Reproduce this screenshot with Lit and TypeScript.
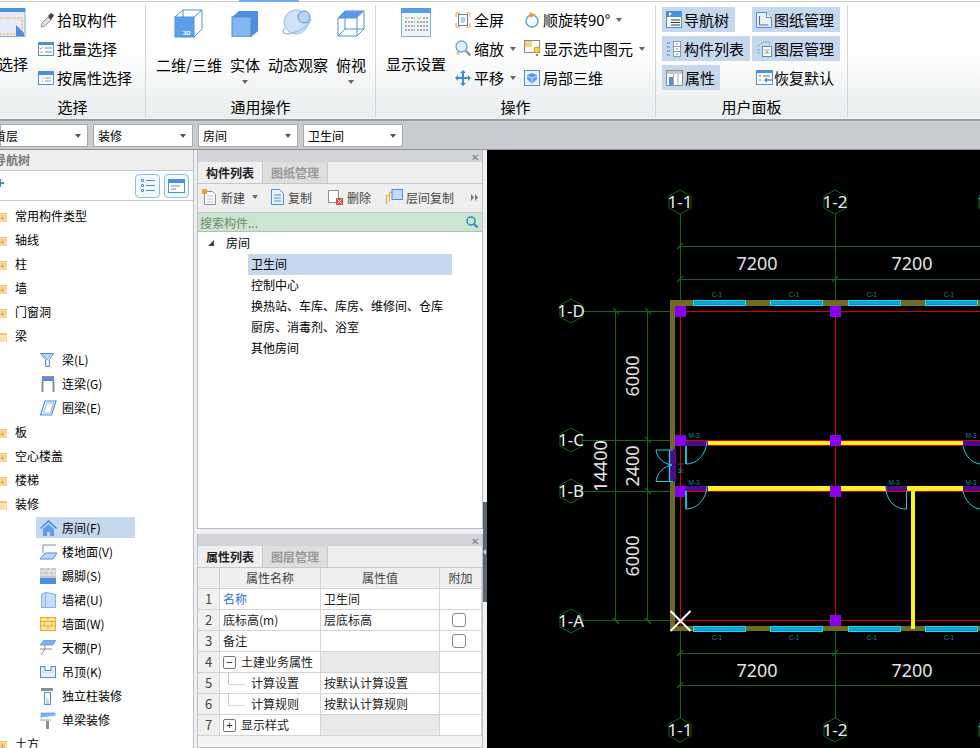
import { LitElement, html, css, svg, nothing } from "lit";
import { customElement } from "lit/decorators.js";

const B = "#4a8fe0", L = "#7fb2ee", O = "#f0a030", G = "#8d9aa8";
const ic = (w: number, h: number, body: unknown, cls = "") =>
  html`<svg class="ic ${cls}" width=${w} height=${h} viewBox="0 0 ${w} ${h}">${body}</svg>`;

const I = {
  bigSelect: ic(28, 30, svg`<rect x="-10" y=".5" width="37" height="28" fill="#e6ecf7" stroke="#7eaee6"/><rect x="-10" y="0" width="37" height="4" fill="${B}"/><rect x="-8" y="10" width="32" height="16" fill="none" stroke="${O}" stroke-dasharray="2 1.4"/><path d="M18 17v11h8v-3z" fill="${B}"/>`),
  pipette: ic(16, 16, svg`<path d="M3 15l1-4 6-6 3 3-6 6z" fill="#ddd" stroke="#999"/><path d="M10 4l3-3 3 2-1 2-2 3z" fill="#444"/>`),
  batch: ic(16, 14, svg`<rect x=".5" y=".5" width="15" height="13" fill="#fff" stroke="${B}"/><rect width="16" height="3" fill="${B}"/><path d="M2 6l1 1 2-2M2 10l1 1 2-2" stroke="${O}" fill="none"/><path d="M7 6h7M7 10h7" stroke="${B}"/>`),
  attrs: ic(16, 14, svg`<rect x=".5" y=".5" width="15" height="13" fill="#fff" stroke="${B}"/><rect width="16" height="4" fill="${B}"/><path d="M4 7h1M4 10h1M7 7h6M7 10h6" stroke="${G}"/>`),
  cube3d: ic(30, 30, svg`<path d="M1 8l8-7h19v19l-8 8" fill="none" stroke="${B}"/><path d="M9 1v7M20 8l8-7" stroke="${B}" fill="none"/><rect x="1" y="8" width="19" height="20" fill="#5c9eea" stroke="${B}"/><text x="9" y="26" class="t3d">3D</text>`),
  solid: ic(28, 28, svg`<path d="M1 8l7-6h19v20l-7 6z" fill="#4f8edc"/><rect x="1" y="8" width="19" height="20" fill="#83b5ee" stroke="${B}"/>`),
  orbit: ic(32, 28, svg`<circle cx="14" cy="13" r="12" fill="#cfe2f8" stroke="#9cc0ea"/><circle cx="22" cy="8" r="6" fill="#b9d5f5" stroke="${B}"/><path d="M3 19c-5 5 0 7 8 5 8-2 16-8 18-14" fill="none" stroke="#9cc0ea" stroke-width="1.5"/>`),
  wire: ic(28, 28, svg`<path d="M1 9l7-7h19v18l-7 7H1z" fill="#fff" stroke="${B}"/><path d="M8 2l19 0-7 7H1z" fill="#5a9ae6"/><path d="M20 9v18M1 9h19M8 2v18h19M1 27l7-7" fill="none" stroke="${B}"/>`),
  display: ic(30, 30, svg`<rect x=".5" y=".5" width="29" height="28" fill="#f0f4fb" stroke="#7eaee6"/><rect width="30" height="5" fill="#5b9be6"/><path d="M4 9l2 2 2-2M16 9l2 2 2-2" stroke="${O}" fill="none"/><path d="M10 10h4M22 10h5M4 14h10M16 14h11M4 18h10M16 18h11M4 22h10M16 22h11" stroke="#667" stroke-dasharray="2 1"/>`),
  full: ic(16, 16, svg`<path d="M1 5V1h4M11 1h4v4M15 11v4h-4M5 15H1v-4" fill="none" stroke="${O}"/><rect x="3.5" y="2.5" width="9" height="11" fill="#fff" stroke="#5b7fa8"/><path d="M5.500 6h5M5.500 8h5M5.500 10h4" stroke="#7f9bc0"/>`),
  rotate: ic(16, 16, svg`<circle cx="8" cy="9" r="6" fill="none" stroke="#5ba0e6" stroke-width="1.500"/><path d="M6 0v6l6-3z" fill="${O}"/>`),
  zoom: ic(16, 17, svg`<circle cx="6.500" cy="6.500" r="5.500" fill="#e6f0fb" stroke="#5ba0e6" stroke-width="1.300"/><path d="M10.500 10.500l5 5" stroke="#999" stroke-width="2.500"/><path d="M1 13h4M3 11v4" stroke="${O}"/>`),
  sel: ic(18, 17, svg`<rect x=".5" y=".5" width="15" height="12" fill="#fff" stroke="#888"/><rect x="1" y="1" width="7" height="6" fill="#f7d484"/><circle cx="13" cy="10" r="3" fill="#f8d44c" stroke="#c9a020"/><path d="M12 14h2v2h-2z" fill="#888"/>`, "tight"),
  pan: ic(16, 16, svg`<path d="M8 0l3 3H9v4h4V5l3 3-3 3V9H9v4h2l-3 3-3-3h2V9H3v2L0 8l3-3v2h4V3H5z" fill="#3f8ae0"/>`),
  part: ic(16, 16, svg`<rect x=".5" y=".5" width="15" height="15" fill="#eef4fc" stroke="${B}"/><path d="M8 3l5 2v4l-5 5-5-5V5z" fill="#5b9be6"/><path d="M3 6l5 2 5-2M8 8v6" stroke="#cfe0f5" fill="none"/>`),
  nav: ic(16, 17, svg`<rect x=".5" y=".5" width="15" height="16" fill="#fff" stroke="${B}"/><rect width="16" height="6" fill="${B}"/><path d="M3 1v4l3-2z" fill="#fff"/><path d="M5 9h9M5 11.500h9M5 14h9" stroke="#333"/>`),
  list: ic(16, 16, svg`<path d="M1 2h3M1 6h3M1 10h3M1 14h3" stroke="${B}" stroke-width="1.500" stroke-dasharray="1.500 .7"/><rect x="7.500" y=".5" width="7" height="15" fill="#fff" stroke="${G}"/><path d="M7 5.500h8M7 10.500h8" stroke="${G}"/><path d="M10 3h2M10 8h2M10 13h2" stroke="${B}"/>`),
  attr: ic(17, 16, svg`<rect x=".5" y=".5" width="16" height="15" fill="#fff" stroke="#8a8f96"/><rect x="1" y="1" width="15" height="3" fill="#c5c8cc"/><rect x="3" y="7" width="4" height="8" fill="${B}"/><path d="M7.500 4v11M12 4v11" stroke="#aaa"/>`),
  sheet: ic(16, 17, svg`<path d="M.5 1.500h10l5 5v10H.5z" fill="#eaf2fc" stroke="${B}"/><path d="M10.500 1.500v5h5" fill="#fff" stroke="${B}"/><path d="M3.500 5v9h9" fill="none" stroke="#667"/>`),
  layer: ic(16, 17, svg`<path d="M1 7l6-5h7l-1 3M1 10h3M1 13h3" fill="none" stroke="#9aa"/><rect x="6.500" y="6.500" width="9" height="10" fill="#fff" stroke="${B}"/><path d="M8 10h6M8 13h6" stroke="#8ab"/><rect x="10" y="11" width="2" height="2" fill="${O}"/>`),
  restore: ic(18, 15, svg`<rect x=".5" y=".5" width="16" height="14" fill="#fff" stroke="${B}"/><rect width="17" height="3" fill="${B}"/><path d="M3 6h2M3 10h2M7 6h7" stroke="#667"/><path d="M17 10H9l2-2M9 10l2 2" fill="none" stroke="${B}" stroke-width="1.300"/>`, "tight"),
  folder: ic(16, 14, svg`<path d="M0 2h6l2 2h8v9H0z" fill="#f2c679"/><path d="M0 5h16v8H0z" fill="#f7d695"/><path d="M10 9h3M11.500 7.500v3" stroke="#d89a3c"/>`),
  folderOpen: ic(16, 14, svg`<path d="M0 2h6l2 2h8v9H0z" fill="#f2c679"/><path d="M2 6h14l-1 7H0z" fill="#fbe2ad"/>`),
  beam: ic(16, 16, svg`<path d="M.5 1.500h13l-4 6v7h-4v-7z" fill="#eaf2fc" stroke="${B}"/><path d="M3 2l4 6 4-6" fill="#c4d8f2" stroke="#8fb4e6"/>`),
  lian: ic(14, 18, svg`<rect x="1" y="1" width="12" height="2" fill="#8a9096"/><rect x="1" y="3" width="12" height="3" fill="${B}"/><path d="M1.500 6v11M12.500 6v11" stroke="#8a9096" stroke-width="2"/>`),
  ring: ic(17, 16, svg`<path d="M5 1h11l-4.500 14H.5z" fill="#eef4fc" stroke="${B}" stroke-width="1.200"/><path d="M7 3h6.500l-3 10H3.500z" fill="#fff" stroke="#9bbdea"/>`),
  house: ic(17, 16, svg`<path d="M8.500 0L0 8l1 1 7.500-7 7.500 7 1-1z" fill="#3f8ae0"/><path d="M3 9l5.500-5L14 9v7h-4v-4H7v4H3z" fill="#5c9eea"/>`),
  floor: ic(17, 16, svg`<path d="M3 9V1h13" fill="none" stroke="#8a9096"/><path d="M5 9h12l-4 6H0z" fill="#bcd5f3" stroke="${B}"/>`),
  skirt: ic(16, 16, svg`<rect width="16" height="10" fill="#c8c8c8"/><path d="M0 3h16M0 7h16M5 0v3M11 0v3M3 3v4M9 3v4M14 3v4" stroke="#eee"/><rect y="10" width="16" height="6" fill="${B}"/>`),
  dado: ic(15, 16, svg`<path d="M.5 2.500l4-2 10 2v13h-10l-4 0z" fill="#c9def6" stroke="${L}" stroke-width="1.200"/><path d="M4.500 .5v15" stroke="${L}"/>`),
  brick: ic(16, 14, svg`<rect x=".5" y=".5" width="15" height="13" fill="#fce4a6" stroke="#f0ad1e"/><path d="M0 4.500h16M0 9h16M8 0v4.500M4 4.500V9M12 4.500V9M8 9v5" stroke="#f0ad1e"/>`),
  ceil: ic(16, 16, svg`<path d="M4 0h12l-3 5H0z" fill="#7fb2ee" stroke="${B}" stroke-width=".6"/><path d="M0 9h12M5 5v4L1 15" fill="none" stroke="#8a9096"/>`),
  drop: ic(16, 12, svg`<path d="M.5 .5h4.500v4h6v-4h4.500v11H.5z" fill="#eaf2fc" stroke="${B}" stroke-width="1.100"/><path d="M3 .5v6h10v-6" fill="none" stroke="#cfe0f5"/>`),
  colD: ic(14, 17, svg`<rect x="0" y="0" width="12" height="3" fill="#8a9096"/><rect x="3.500" y="4.500" width="6" height="12" fill="#fff" stroke="${B}"/><path d="M5 9v7h3v-4z" fill="#bcd5f3"/>`),
  beamD: ic(16, 17, svg`<path d="M1 1h14v3L1 6z" fill="${L}" stroke="${B}" stroke-width=".6"/><path d="M1 6l14-2" stroke="#fff"/><path d="M0 8h11" stroke="${G}"/><rect x="6" y="9" width="3" height="8" fill="#8a9096"/>`),
  listBtn: ic(14, 13, svg`<path d="M.5 .5h2v2h-2zM.5 5.500h2v2h-2zM.5 10.500h2v2h-2z" fill="#fff" stroke="${B}"/><path d="M5 1.500h9M5 6.500h9M5 11.500h9" stroke="${B}"/>`),
  winBtn: ic(17, 14, svg`<rect x=".5" y=".5" width="16" height="13" fill="#fff" stroke="${B}"/><rect width="17" height="4" fill="${B}"/><path d="M3 7h9M3 10h5" stroke="${B}"/>`),
  tbNew: ic(15, 16, svg`<path d="M2.500 2.500h8l3 3v10h-11z" fill="#fff" stroke="#8a9096"/><path d="M5 7h6M5 10h6M5 13h6" stroke="#bbb"/><path d="M0 0h5v5H0z" fill="${O}"/>`),
  tbCopy: ic(13, 16, svg`<path d="M.5 .5h8l4 4v11H.5z" fill="#eaf2fc" stroke="${B}"/><path d="M3 6h7M3 9h7M3 12h7" stroke="${B}"/>`),
  tbDel: ic(15, 15, svg`<rect x=".5" y=".5" width="10" height="12" fill="#fff" stroke="#8a9096"/><rect x="8" y="8" width="7" height="7" fill="#e04848"/><path d="M9.500 9.500l4 4M13.500 9.500l-4 4" stroke="#fff"/>`),
  tbLayer: ic(17, 16, svg`<path d="M.5 15.500v-9h3M3.500 12.500v-9h3" fill="none" stroke="${O}"/><rect x="6" y=".5" width="10.500" height="10" fill="#c4dcf8" stroke="${B}"/>`),
  mag: ic(12, 12, svg`<circle cx="5" cy="5" r="4" fill="none" stroke="#2a88c8" stroke-width="1.500"/><path d="M8 8l3.500 3.500" stroke="#2a88c8" stroke-width="2"/>`),
  more: ic(7, 7, svg`<path d="M0 0l3 3.500-3 3.500zM4 0l3 3.500-3 3.500z" fill="#777"/>`),
};

const TREE: [string, "f" | "o" | "c", unknown?, boolean?][] = [
  ["常用构件类型", "f"], ["轴线", "f"], ["柱", "f"], ["墙", "f"], ["门窗洞", "f"], ["梁", "o"],
  ["梁(L)", "c", I.beam], ["连梁(G)", "c", I.lian], ["圈梁(E)", "c", I.ring],
  ["板", "f"], ["空心楼盖", "f"], ["楼梯", "f"], ["装修", "o"],
  ["房间(F)", "c", I.house, true], ["楼地面(V)", "c", I.floor], ["踢脚(S)", "c", I.skirt], ["墙裙(U)", "c", I.dado],
  ["墙面(W)", "c", I.brick], ["天棚(P)", "c", I.ceil], ["吊顶(K)", "c", I.drop], ["独立柱装修", "c", I.colD], ["单梁装修", "c", I.beamD],
  ["土方", "f"],
];

const AX = "#0a6e0a";
const hex = (x: number, y: number, t: string) => svg`
  <polygon points="${x},${y - 12} ${x + 11},${y - 6} ${x + 11},${y + 6} ${x},${y + 12} ${x - 11},${y + 6} ${x - 11},${y - 6}" fill="#000" stroke="${AX}"/>
  <text x=${x} y=${y + 6} class="axt">${t}</text>`;
const tick = (x: number, y: number) => svg`<path d="M${x - 3} ${y + 3}L${x + 3} ${y - 3}" stroke="${AX}" stroke-width="1.300"/>`;
const tick2 = (x: number, y: number) => svg`<path d="M${x - 3} ${y - 3}L${x + 3} ${y + 3}" stroke="${AX}" stroke-width="1.300"/>`;
const win = (x: number, y: number, ly: number) => svg`
  <rect x=${x + .5} y=${y + .5} width="52" height="5" fill="#0090c8" stroke="#19e0f0"/>
  <path d="M${x} ${y + 3}h52" stroke="#60e8f8" stroke-width=".5"/>
  <text x=${x + 24} y=${ly} class="lab">C-1</text>`;
const col = (x: number, y: number) => svg`<rect x=${x} y=${y} width="11" height="11" fill="#8800ee"/>`;
const dim = (t: string, x: number, y: number) => svg`<text class="dim" transform="rotate(-90 ${x} ${y})" x=${x} y=${y + 6}>${t}</text>`;
const doorR = (y: number) => svg`
  <rect x="686" y=${y} width="22" height="5" fill="#480f8c"/>
  <path d="M686 ${y + 5}v18c10 0 20-8 21-23" fill="none" stroke="#14d4e4" stroke-width="1"/>
  <path d="M686 ${y + 5}v18" stroke="#14d4e4" stroke-width="1.500"/>`;

@customElement("app-root")
export class AppRoot extends LitElement {
  static styles = css`
    :host { display: block; width: 980px; height: 748px; overflow: hidden; background: #f0f0f0; font-family: "Noto Sans CJK SC", "Noto Sans", sans-serif; color: #000; }
    * { box-sizing: border-box; }
    .ic { display: block; flex: none; }
    .ic.tight { margin-right: -2px; }
    .t3d { font: bold 6px "Liberation Sans", sans-serif; fill: #fff; }
    .top { height: 2px; background: #fff; border-bottom: 1px solid #ccc; }
    .top i { display: block; margin-left: 239px; width: 60px; height: 2px; background: #6aaef0; }
    .ribbon { display: flex; height: 119px; border-bottom: 2px solid #9a9c9e; background: linear-gradient(#fff 40%, #eceff0 90%); font-size: 15px; line-height: 20px; overflow: hidden; }
    .group { display: flex; flex-direction: column; flex: none; margin-top: 3px; margin-bottom: 2px; border-right: 1px solid #d3d6d8; }
    .g1 { width: 146px; } .g2 { width: 230px; } .g3 { width: 280px; } .g4 { width: 192px; }
    .gbody { height: 92px; display: flex; }
    .glabel { text-align: center; line-height: 20px; margin-top: 1px; }
    .big { display: flex; flex-direction: column; align-items: center; padding-top: 3px; white-space: nowrap; }
    .bigicon { height: 44px; display: flex; align-items: flex-start; }
    .biglab { margin-top: 2px; }
    .g1 .big { width: 40px; margin-left: -2px; align-items: flex-start; padding-left: 0; }
    .stack { display: flex; flex-direction: column; }
    .small { display: flex; align-items: center; height: 29px; gap: 3px; white-space: nowrap; }
    .g2 .gbody { padding-left: 10px; gap: 8px; }
    .g2 .big { padding-top: 4px; }
    .g3 .big { width: 60px; margin-left: 10px; }
    .g3 .s1 { margin-left: 9px; width: 69px; }
    .caret { width: 0; height: 0; border: 3.500px solid transparent; border-top: 4px solid #666; border-bottom: 0; margin-left: 3px; flex: none; }
    .bigcaret { margin: 5px 0 0; }
    .g4 .gbody { padding-left: 6px; gap: 2px; padding-top: 2px; }
    .pane { display: flex; align-items: center; height: 25px; padding-left: 4px; gap: 2px; margin-bottom: 4px; white-space: nowrap; }
    .pane.on { background: #c6d8ee; }
    .w73 { width: 73px; } .w88 { width: 88px; } .w58 { width: 58px; }
    .right { width: 88px; }
    .col2 { width: 88px; }
    .selbar { height: 29px; background: #c8cbd0; border-bottom: 1px solid #8f9194; display: flex; gap: 5px; padding-top: 3px; padding-bottom: 2px; font-size: 12px; line-height: 20px; }
    .sel { width: 100px; height: 23px; background: #fff; border: 1px solid #aaa; display: flex; align-items: center; justify-content: space-between; padding: 0 6px 0 4px; }
    .sel.first { width: 88px; padding-left: 0; }
    .sel.first span { margin-left: -7px; }
    .sel .caret { border-top-color: #555; }
    .main { height: 598px; display: flex; }
    .left { width: 194px; flex: none; background: #fff; border-right: 1px solid #b9bcc2; display: flex; flex-direction: column; overflow: hidden; }
    .lhead { height: 21px; background: #efefef; border-bottom: 1px solid #c5c8cd; font-size: 12px; font-weight: 700; color: #777; line-height: 20px; text-indent: -6px; flex: none; }
    .ltool { height: 30px; flex: none; background: #fff; border-bottom: 1px solid #c5c8cd; display: flex; align-items: center; }
    .lbtns { margin-left: auto; display: flex; gap: 4px; margin-right: 4px; }
    .lbtn { width: 25px; height: 24px; border: 1px solid #8abcf2; border-radius: 4px; background: #f2f8ff; display: flex; align-items: center; justify-content: center; }
    .plusi { margin-left: -4px; margin-top: -5px; flex: none; }
    .tree { padding-top: 3px; font-size: 12px; line-height: 24px; flex: none; }
    .row { height: 24px; display: flex; align-items: center; white-space: nowrap; }
    .row.f .ic { margin-left: -9px; margin-right: 8px; }
    .row.c { margin-left: 36px; width: 99px; padding-left: 4px; gap: 6px; }
    .row.c .slot { width: 16px; display: flex; justify-content: center; flex: none; }
    .row.on { background: linear-gradient(transparent 1px, #c6d8ee 1px, #c6d8ee 22px, transparent 22px); }
    .gapL { width: 3px; flex: none; background: #f0f0f0; }
    .mid { width: 286px; flex: none; display: flex; flex-direction: column; }
    .panel { border: 1px solid #b9bcc2; border-top: 0; display: flex; flex-direction: column; background: #fff; overflow: hidden; }
    .p1 { height: 379px; flex: none; }
    .p2 { height: 214px; flex: none; margin-top: 5px; background: #f4f4f4; }
    .pt { height: 12px; background: #d2d4d9; display: flex; justify-content: flex-end; align-items: center; padding-right: 3px; font-size: 10px; color: #777; line-height: 11px; flex: none; }
    .tabs { height: 22px; display: flex; background: #efefef; border-bottom: 1px solid #c5c8cd; font-size: 12px; line-height: 21px; flex: none; }
    .tab { width: 65px; text-align: center; font-weight: 700; color: #222; border-right: 1px solid #c5c8cd; }
    .tab.off { background: #dedede; color: #999; }
    .mtool { height: 29px; background: #efefef; border-bottom: 1px solid #c5c8cd; display: flex; align-items: center; padding: 0 0 2px 4px; font-size: 12px; color: #444; flex: none; }
    .mi { display: flex; align-items: center; gap: 4px; white-space: nowrap; }
    .m1 { width: 69px; } .m2 { width: 57px; } .m3 { width: 58px; } .m4 { width: 85px; gap: 3px; }
    .search { height: 19px; background: #cbe6cf; border-bottom: 1px solid #bbb; display: flex; align-items: center; justify-content: space-between; padding: 0 4px 0 2px; font-size: 12px; color: #6f8a73; flex: none; }
    .mtree { font-size: 12px; line-height: 19px; padding-top: 1px; flex: 1; }
    .mroot { display: flex; align-items: center; height: 21px; padding: 0 0 2px 10px; gap: 12px; }
    .tri { width: 0; height: 0; border-style: solid; border-width: 0 0 6px 6px; border-color: transparent transparent #444 transparent; flex: none; }
    .mrow { margin-left: 50px; padding-left: 3px; width: 204px; height: 21px; white-space: nowrap; }
    .mrow.on { background: #c6d8ee; }
    .table { display: grid; grid-template-columns: 22px 101px 119px 42px; grid-auto-rows: 21px; font-size: 12px; line-height: 20px; flex: none; color: #222; }
    .table > div { border-right: 1px solid #d4d4d4; border-bottom: 1px solid #d4d4d4; padding: 0 3px; background: #fff; white-space: nowrap; display: flex; align-items: center; position: relative; }
    .table .h { background: #efefef; justify-content: center; color: #444; }
    .table .n { background: #f0f0f0; justify-content: center; font-size: 13px; color: #444; padding: 0; }
    .table .gr { background: #e9e9e9; }
    .table .blue { color: #2a6fe8; }
    .cb { width: 14px; height: 14px; border: 1px solid #888; border-radius: 3px; background: #fff; margin-left: 9px; }
    .box { width: 13px; height: 13px; border: 1px solid #777; border-radius: 2px; margin-right: 5px; background: #fff; display: flex; align-items: center; justify-content: center; font: 11px/11px "Liberation Sans", sans-serif; flex: none; }
    .ind { padding-left: 31px !important; }
    .ind::before { content: ""; position: absolute; left: 8px; top: -1px; width: 16px; height: 12px; border-left: 1px solid #c4c4c4; border-bottom: 1px solid #d8d8d8; }
    .split { width: 4px; flex: none; background: #f0f0f0; display: flex; flex-direction: column; }
    .split i { display: flex; align-items: center; margin-top: 352px; height: 100px; background: #5a6670; }
    .split i::before { content: ""; border: 3px solid transparent; border-right-color: #cfd3d6; border-left: 0; }
    .canvas { display: block; flex: none; background: #000; }
    .axt { font: 17px "Noto Sans", sans-serif; fill: #eee; text-anchor: middle; }
    .dim { font: 18px "Noto Sans", sans-serif; fill: #e4e4e4; text-anchor: middle; }
    .lab { font: 6.500px "Liberation Sans", sans-serif; fill: #0a8f96; text-anchor: middle; }
  `;

  private big(icon: unknown, label: string, caret = false) {
    return html`<div class="big"><div class="bigicon">${icon}</div><div class="biglab">${label}</div>${caret ? html`<div class="caret bigcaret"></div>` : nothing}</div>`;
  }
  private small(icon: unknown, label: string, caret = false) {
    return html`<div class="small">${icon}<span>${label}</span>${caret ? html`<div class="caret"></div>` : nothing}</div>`;
  }
  private pane(icon: unknown, label: string, cls: string) {
    return html`<div class="pane ${cls}">${icon}<span>${label}</span></div>`;
  }

  private canvas() {
    const winX = [693, 770, 848, 925];
    return html`<svg class="canvas" width="493" height="598" viewBox="487 150 493 598">
      <g fill="none" stroke=${AX}>
        <path d="M680.500 214V718M835.500 214V718"/>
        <path d="M680 246.500H980M680 279.500H980M680 653.500H980M680 685.500H980"/>
        <path d="M582 311.500H680M582 440.500H680M582 491.500H680M582 620.500H680"/>
        <path d="M615.500 311V621M647.500 311V621"/>
      </g>
      ${[246, 279, 653].map((y) => tick(680, y))}${tick(835, 279)}${tick(835, 653)}${tick(680, 685)}
      ${[311, 621].map((y) => tick2(616, y))}${[311, 440, 491, 621].map((y) => tick2(648, y))}
      <path d="M670 300H980V306H675V626H980V631H670Z" fill="#6f6b1f"/>
      <path d="M675 311.500H980M675 620.500H980M680.500 316V626M835.500 316V626" stroke="#d80000" fill="none"/>
      <path d="M680 445.500H980M680 491.500H980M680 440.500H980" stroke="#d80000" fill="none"/>
      <rect x="707" y="441" width="256" height="4" fill="#fcf420"/>
      <rect x="707" y="486" width="179" height="5" fill="#fcf420"/>
      <rect x="906" y="486" width="57" height="5" fill="#fcf420"/>
      <rect x="911" y="491" width="4" height="138" fill="#fcf420"/>
      ${[[675, 306], [830, 306], [675, 435], [830, 435], [675, 486], [830, 486], [830, 615]].map(([x, y]) => col(x, y))}
      ${winX.map((x) => win(x, 300, 297))}
      ${winX.map((x) => win(x, 626, 640))}
      ${doorR(441)}${doorR(486)}
      <rect x="886" y="486" width="21" height="5" fill="#480f8c"/>
      <path d="M906.500 491v18c-10 0-20-6-21-23" fill="none" stroke="#14d4e4"/>
      <rect x="963" y="441" width="17" height="5" fill="#480f8c"/>
      <rect x="963" y="486" width="17" height="5" fill="#480f8c"/>
      <path d="M963 446c2 10 9 17 17 18M963 491c2 10 9 17 17 18" fill="none" stroke="#14d4e4"/>
      <rect x="670" y="449" width="6" height="33" fill="#480f8c"/>
      <path d="M656 450H673M656 481.500H673M669.500 450V481" stroke="#14d4e4" fill="none" stroke-width="1.200"/>
      <path d="M656 450C657 458 664 464 672 465M656 481C657 473 664 466 672 465" fill="none" stroke="#14d4e4"/>
      ${[[694, 438], [694, 485], [894, 485], [971, 438], [971, 485]].map(([x, y]) => svg`<text x=${x} y=${y} class="lab">M-3</text>`)}
      <text class="lab" transform="rotate(-90 683 468)" x="683" y="468">M-1</text>
      <path d="M670.500 611L690.500 631M690.500 611L670.500 631" stroke="#fff" stroke-width="2"/>
      ${[["7200", 757, 270], ["7200", 912, 270], ["7200", 757, 677], ["7200", 912, 677]].map(([t, x, y]) => svg`<text class="dim" x=${x} y=${y}>${t}</text>`)}
      ${dim("6000", 633, 376)}${dim("2400", 633, 466)}${dim("6000", 633, 556)}${dim("14400", 601, 466)}
      ${hex(680, 202, "1-1")}${hex(835, 202, "1-2")}${hex(990, 202, "1-3")}
      ${hex(680, 730, "1-1")}${hex(835, 730, "1-2")}${hex(990, 730, "1-3")}
      ${hex(571, 311, "1-D")}${hex(571, 440, "1-C")}${hex(571, 491, "1-B")}${hex(571, 621, "1-A")}
    </svg>`;
  }

  render() {
    return html`
      <div class="top"><i></i></div>
      <div class="ribbon">
        <div class="group g1">
          <div class="gbody">
            ${this.big(I.bigSelect, "选择")}
            <div class="stack">
              ${this.small(I.pipette, "拾取构件")}
              ${this.small(I.batch, "批量选择")}
              ${this.small(I.attrs, "按属性选择")}
            </div>
          </div>
          <div class="glabel">选择</div>
        </div>
        <div class="group g2">
          <div class="gbody">
            ${this.big(I.cube3d, "二维/三维")}
            ${this.big(I.solid, "实体", true)}
            ${this.big(I.orbit, "动态观察")}
            ${this.big(I.wire, "俯视", true)}
          </div>
          <div class="glabel">通用操作</div>
        </div>
        <div class="group g3">
          <div class="gbody">
            ${this.big(I.display, "显示设置")}
            <div class="stack s1">
              ${this.small(I.full, "全屏")}
              ${this.small(I.zoom, "缩放", true)}
              ${this.small(I.pan, "平移", true)}
            </div>
            <div class="stack">
              ${this.small(I.rotate, "顺旋转90°", true)}
              ${this.small(I.sel, "显示选中图元", true)}
              ${this.small(I.part, "局部三维")}
            </div>
          </div>
          <div class="glabel">操作</div>
        </div>
        <div class="group g4">
          <div class="gbody">
            <div class="stack col2">
              ${this.pane(I.nav, "导航树", "on w73")}
              ${this.pane(I.list, "构件列表", "on w88")}
              ${this.pane(I.attr, "属性", "on w58")}
            </div>
            <div class="stack right">
              ${this.pane(I.sheet, "图纸管理", "on")}
              ${this.pane(I.layer, "图层管理", "on")}
              ${this.pane(I.restore, "恢复默认", "")}
            </div>
          </div>
          <div class="glabel">用户面板</div>
        </div>
      </div>
      <div class="selbar">
        <div class="sel first"><span>首层</span><div class="caret"></div></div>
        <div class="sel"><span>装修</span><div class="caret"></div></div>
        <div class="sel"><span>房间</span><div class="caret"></div></div>
        <div class="sel"><span>卫生间</span><div class="caret"></div></div>
      </div>
      <div class="main">
        <div class="left">
          <div class="lhead">导航树</div>
          <div class="ltool">
            ${ic(8, 8, svg`<path d="M0 4h8M4 0v8" stroke="#3f8ae0" stroke-width="2"/>`, "plusi")}
            <div class="lbtns"><div class="lbtn">${I.listBtn}</div><div class="lbtn">${I.winBtn}</div></div>
          </div>
          <div class="tree">
            ${TREE.map(([t, k, icon, on]) => k === "c"
              ? html`<div class="row c ${on ? "on" : ""}"><div class="slot">${icon}</div><span>${t}</span></div>`
              : html`<div class="row f">${k === "o" ? I.folderOpen : I.folder}<span>${t}</span></div>`)}
          </div>
        </div>
        <div class="gapL"></div>
        <div class="mid">
          <div class="panel p1">
            <div class="pt">✕</div>
            <div class="tabs"><div class="tab">构件列表</div><div class="tab off">图纸管理</div></div>
            <div class="mtool">
              <div class="mi m1">${I.tbNew}<span>新建</span><div class="caret"></div></div>
              <div class="mi m2">${I.tbCopy}<span>复制</span></div>
              <div class="mi m3">${I.tbDel}<span>删除</span></div>
              <div class="mi m4">${I.tbLayer}<span>层间复制</span></div>
              ${I.more}
            </div>
            <div class="search"><span>搜索构件...</span>${I.mag}</div>
            <div class="mtree">
              <div class="mroot"><div class="tri"></div><span>房间</span></div>
              <div class="mrow on">卫生间</div>
              <div class="mrow">控制中心</div>
              <div class="mrow">换热站、车库、库房、维修间、仓库</div>
              <div class="mrow">厨房、消毒剂、浴室</div>
              <div class="mrow">其他房间</div>
            </div>
          </div>
          <div class="panel p2">
            <div class="pt">✕</div>
            <div class="tabs"><div class="tab">属性列表</div><div class="tab off">图层管理</div></div>
            <div class="table">
              <div class="h"></div><div class="h">属性名称</div><div class="h">属性值</div><div class="h">附加</div>
              <div class="n">1</div><div class="blue">名称</div><div>卫生间</div><div></div>
              <div class="n">2</div><div>底标高(m)</div><div>层底标高</div><div><div class="cb"></div></div>
              <div class="n">3</div><div>备注</div><div></div><div><div class="cb"></div></div>
              <div class="n">4</div><div><span class="box">−</span>土建业务属性</div><div class="gr"></div><div></div>
              <div class="n">5</div><div class="ind">计算设置</div><div>按默认计算设置</div><div></div>
              <div class="n">6</div><div class="ind">计算规则</div><div>按默认计算规则</div><div></div>
              <div class="n">7</div><div><span class="box">+</span>显示样式</div><div class="gr"></div><div></div>
            </div>
          </div>
        </div>
        <div class="split"><i></i></div>
        ${this.canvas()}
      </div>
    `;
  }
}
